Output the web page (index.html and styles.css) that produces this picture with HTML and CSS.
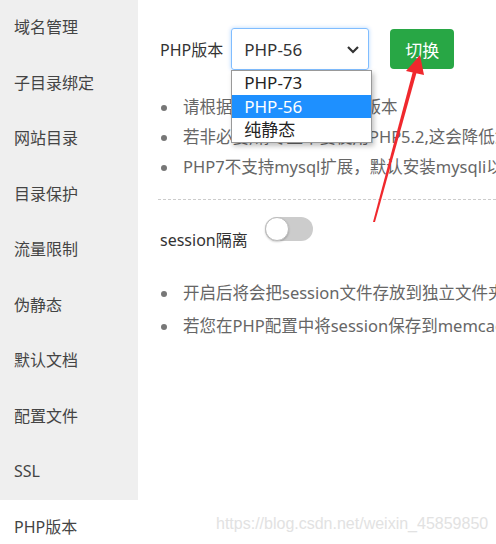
FILE: index.html
```html
<!DOCTYPE html>
<html lang="zh-CN">
<head>
    <meta charset="UTF-8">
    <title>PHP版本</title>
    <link rel="stylesheet" href="styles.css">
</head>
<body>

<div class="page">
    <ul class="sidebar">
        <li>域名管理</li>
        <li>子目录绑定</li>
        <li>网站目录</li>
        <li>目录保护</li>
        <li>流量限制</li>
        <li>伪静态</li>
        <li>默认文档</li>
        <li>配置文件</li>
        <li>SSL</li>
        <li class="active">PHP版本</li>
    </ul>

    <div class="main">
        <div class="version-row">
            <span class="label">PHP版本</span>
            <div class="select">
                <span>PHP-56</span>
                <svg class="chevron" width="14" height="10" viewBox="0 0 14 10">
                    <path d="M2 2 L7 7 L12 2" fill="none" stroke="#333" stroke-width="2.2"/>
                </svg>
                <ul class="options">
                    <li>PHP-73</li>
                    <li class="selected">PHP-56</li>
                    <li>纯静态</li>
                </ul>
            </div>
            <button class="btn-switch">切换</button>
        </div>

        <ul class="tips">
            <li>请根据您的程序需求选择版本</li>
            <li>若非必要,请尽量不要使用PHP5.2,这会降低您的服务器安全性；</li>
            <li>PHP7不支持mysql扩展，默认安装mysqli以及mysql-pdo。</li>
        </ul>

        <div class="line"></div>

        <div class="session-row">
            <span class="label">session隔离</span>
            <span class="toggle"><span class="knob"></span></span>
        </div>

        <ul class="tips session-tips">
            <li>开启后将会把session文件存放到独立文件夹，不与其他站点公用存储位置</li>
            <li>若您在PHP配置中将session保存到memcache/redis等缓存器时，请不要开启此选项。</li>
        </ul>
    </div>

    <!-- red annotation arrow -->
    <svg class="arrow" width="70" height="180" viewBox="0 0 70 180">
        <path d="M13 168 L15 168 L57 17 L53 17 Z" fill="#f0282d"/>
        <path d="M60 1 L46 17 L64 21 Z" fill="#f0282d"/>
    </svg>

    <div class="watermark">https://blog.csdn.net/weixin_45859850</div>
</div>

</body>
</html>
```

FILE: styles.css
```css
body {
    margin: 0;
    font-family: "Noto Sans", "Noto Sans CJK SC", sans-serif;
    color: #333;
    background: #fff;
}
.page {
    position: relative;
    display: flex;
    width: 496px;
    height: 544px;
    overflow: hidden;
}
.sidebar {
    list-style: none;
    margin: 0;
    padding: 0;
    width: 138px;
    flex-shrink: 0;
    background: #efefef;
    align-self: flex-start;
}
.sidebar li {
    height: 55.5px;
    line-height: 55px;
    padding-left: 14px;
    font-size: 16px;
    color: #444;
}
.sidebar li.active {
    background: #fff;
}
.main {
    flex: 1;
    min-width: 0;
    padding: 28px 0 0 22px;
}
.label {
    font-size: 16px;
    color: #333;
}
.version-row {
    display: flex;
    align-items: center;
    height: 42px;
}
.select {
    position: relative;
    width: 138px;
    height: 42px;
    margin-left: 8px;
    box-sizing: border-box;
    border: 1px solid #80bdff;
    border-radius: 3px;
    box-shadow: 0 0 4px rgba(0, 123, 255, 0.3);
    display: flex;
    align-items: center;
    padding-left: 12px;
    font-size: 17px;
    color: #333;
}
.chevron {
    position: absolute;
    right: 8px;
    top: 16px;
}
.options {
    list-style: none;
    margin: 0;
    padding: 0;
    position: absolute;
    left: -1px;
    top: 41px;
    width: 139px;
    background: #fff;
    border: 1px solid #999;
    box-shadow: 2px 3px 5px rgba(0, 0, 0, 0.25);
    z-index: 2;
}
.options li {
    height: 23.5px;
    line-height: 23px;
    padding-left: 12px;
    font-size: 17px;
    color: #222;
}
.options li.selected {
    background: #1e90ff;
    color: #fff;
}
.btn-switch {
    margin-left: 21px;
    width: 64px;
    height: 40px;
    border: none;
    border-radius: 4px;
    background: #28a745;
    color: #fff;
    font-family: inherit;
    font-size: 17px;
}
.tips {
    list-style: none;
    margin: 22px 0 0;
    padding: 0;
    font-size: 16.5px;
    color: #666;
    line-height: 30px;
}
.tips li {
    white-space: nowrap;
    overflow: hidden;
}
.tips li::before {
    content: "";
    display: inline-block;
    width: 6px;
    height: 6px;
    border-radius: 50%;
    background: #777;
    margin: 0 16px 2px 1px;
    vertical-align: middle;
}
.line {
    margin: 17px -10px 0 -2px;
    border-top: 1px dashed #ccc;
}
.session-row {
    display: flex;
    align-items: flex-start;
    margin-top: 17px;
}
.session-row .label {
    line-height: 24px;
    margin-top: 11px;
}
.toggle {
    position: relative;
    display: inline-block;
    width: 48px;
    height: 24px;
    margin-left: 17px;
    border-radius: 12px;
    background: #ccc;
}
.knob {
    position: absolute;
    left: 0;
    top: 0;
    width: 22px;
    height: 22px;
    border-radius: 50%;
    background: #fff;
    border: 1px solid #bbb;
    box-shadow: 0 1px 2px rgba(0, 0, 0, 0.2);
}
.session-tips {
    margin-top: 24px;
    line-height: 33px;
}
.arrow {
    position: absolute;
    left: 360px;
    top: 54px;
}
.watermark {
    position: absolute;
    left: 216px;
    top: 515px;
    font-family: "Liberation Sans", Arial, sans-serif;
    font-size: 16px;
    color: #e2e2e2;
}
```
